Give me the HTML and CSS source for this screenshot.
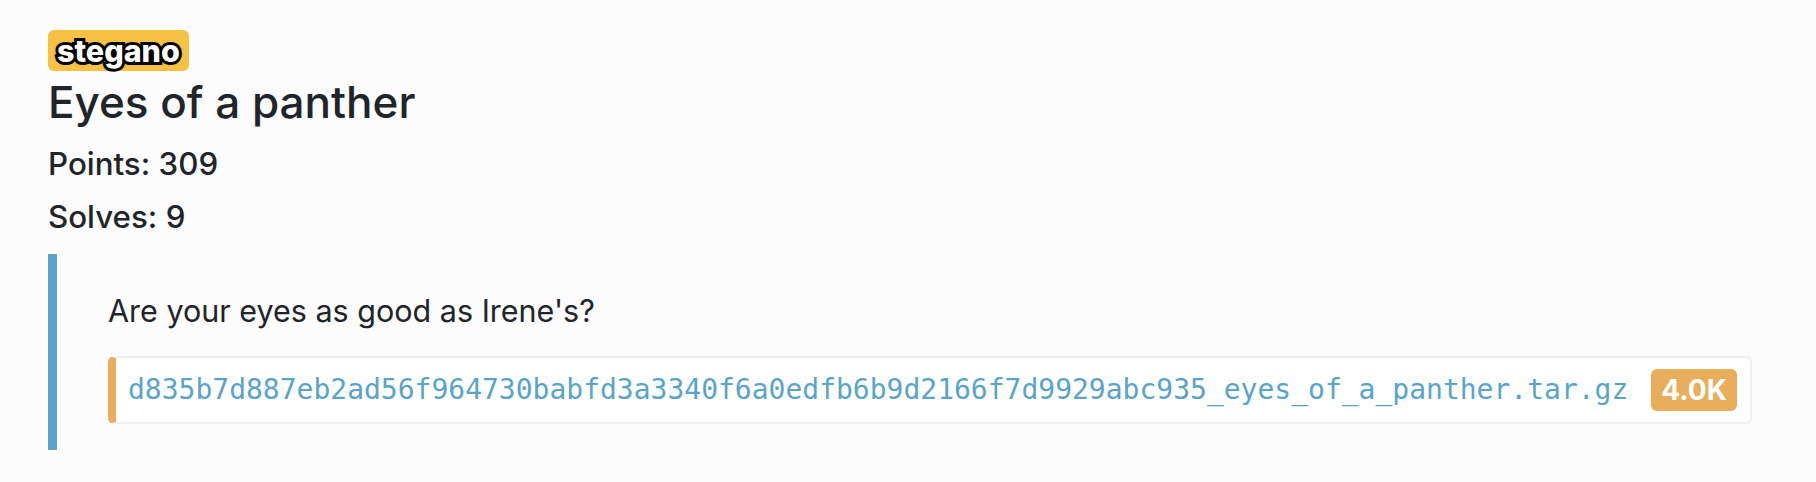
FILE: index.html
```html
<!DOCTYPE html>
<html lang="en">
<head>
<meta charset="utf-8">
<title>Eyes of a panther</title>
<link rel="stylesheet" href="styles.css">
</head>
<body>
<main class="challenge">
  <span class="tag">stegano</span>
  <h2 class="title">Eyes of a panther</h2>
  <p class="stat">Points: 309</p>
  <p class="stat">Solves: 9</p>
  <blockquote class="desc">
    <p class="desc-text">Are your eyes as good as Irene's?</p>
    <a class="file" href="#"><span class="file-name">d835b7d887eb2ad56f964730babfd3a3340f6a0edfb6b9d2166f7d9929abc935_eyes_of_a_panther.tar.gz</span><span class="file-size">4.0K</span></a>
  </blockquote>
</main>
</body>
</html>
```
FILE: styles.css
```css
html, body {
  margin: 0;
  padding: 0;
  background: #fcfcfc;
}
body {
  font-family: Inter, "Noto Sans", sans-serif;
  color: #212529;
}
.challenge {
  padding: 30px 48px 0 48px;
}
.tag {
  display: inline-block;
  background: #f7c244;
  border-radius: 6px;
  height: 41px;
  line-height: 41px;
  padding: 0 9px;
  font-size: 30.5px;
  font-weight: 800;
  color: #fff;
  -webkit-text-stroke: 6px #000;
  paint-order: stroke fill;
  vertical-align: top;
}
.title {
  margin: 5px 0 0 0;
  font-size: 44px;
  font-weight: 500;
  line-height: 1.2;
}
.stat {
  margin: 12px 0 0 0;
  font-size: 31.3px;
  font-weight: 500;
  line-height: 1.5;
}
.stat + .stat {
  margin-top: 6px;
}
.desc {
  margin: 13px 0 0 0;
  border-left: 9px solid #5aa4c7;
  padding: 35px 0 26px 51px;
}
.desc-text {
  margin: 0 0 22px 0;
  font-size: 30.5px;
  line-height: 1.47;
}
.file {
  display: inline-flex;
  align-items: center;
  background: #fff;
  border: 2px solid #efefef;
  border-left: 8px solid #e8ae5c;
  border-radius: 6px;
  height: 64px;
  padding: 0 13px 0 12px;
  text-decoration: none;
}
.file-name {
  font-family: "DejaVu Sans Mono", "Liberation Mono", monospace;
  font-size: 28px;
  color: #5aa4c7;
}
.file-size {
  margin-left: 23px;
  background: #e8ae5c;
  color: #fff;
  font-weight: 700;
  font-size: 28px;
  height: 42px;
  line-height: 42px;
  padding: 0 10px;
  border-radius: 6px;
}
```
